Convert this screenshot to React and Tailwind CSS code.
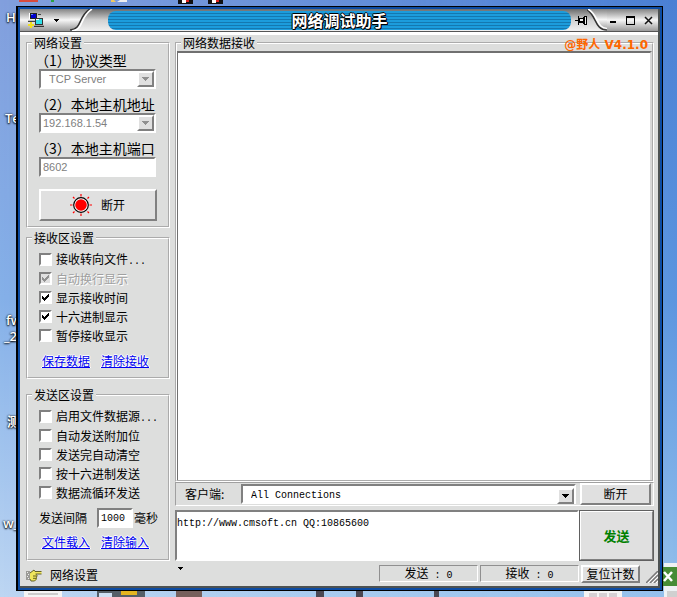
import { useState } from "react";
import clsx from "clsx";

const RECEIVE_OPTIONS = [
    { id: "to_file", label: "接收转向文件", more: true, checked: false },
    { id: "auto_wrap", label: "自动换行显示", checked: true, disabled: true },
    { id: "show_time", label: "显示接收时间", checked: true },
    { id: "hex_view", label: "十六进制显示", checked: true },
    { id: "pause_view", label: "暂停接收显示", checked: false },
];

const SEND_OPTIONS = [
    { id: "file_source", label: "启用文件数据源", more: true, checked: false },
    { id: "auto_suffix", label: "自动发送附加位", checked: false },
    { id: "auto_clear", label: "发送完自动清空", checked: false },
    { id: "hex_send", label: "按十六进制发送", checked: false },
    { id: "loop_send", label: "数据流循环发送", checked: false },
];

const SUNKEN = "border-2 border-t-[#808080] border-l-[#808080] border-b-white border-r-white bg-white outline-none";
const RAISED = "border-2 border-t-white border-l-white border-b-[#808080] border-r-[#808080] bg-[#e0e0e0]";
const LINK = "text-[#0000f0] underline [text-shadow:1px_0_#fff,-1px_0_#fff,0_-1px_#fff]";
const MONO = "font-['Liberation_Mono',monospace] text-[10px]";

function GroupBox({ title, className, children }) {
    return (
        <fieldset className={clsx("min-w-0 border-2 border-white [border-style:groove]", className)}>
            <legend className="ml-1 h-4 px-0.5 leading-4">{title}</legend>
            {children}
        </fieldset>
    );
}

function CheckOption({ id, label, more, checked, disabled }) {
    const [on, setOn] = useState(checked);
    return (
        <div className="flex h-[19px] items-center gap-1">
            <span className="grid size-[13px] place-items-center">
                <input
                    id={id}
                    type="checkbox"
                    checked={on}
                    disabled={disabled}
                    onChange={(e) => setOn(e.target.checked)}
                    className={clsx(
                        "col-start-1 row-start-1 size-[13px] appearance-none border-2 border-t-[#808080] border-r-white border-b-white border-l-[#808080]",
                        disabled ? "bg-[#e0e0e0]" : "bg-white"
                    )}
                />
                {on && (
                    <svg viewBox="0 0 7 7" className="pointer-events-none col-start-1 row-start-1 size-[7px]" shapeRendering="crispEdges">
                        <path
                            d="M0 2h1v1h1v1h1v-1h1v-1h1v-1h1v-1h1v3h-1v1h-1v1h-1v1h-1v1h-1v-1h-1v-1h-1z"
                            fill={disabled ? "#909090" : "#000"}
                        />
                    </svg>
                )}
            </span>
            <label
                htmlFor={id}
                className={clsx("whitespace-nowrap", disabled && "text-[#a0a0a0] [text-shadow:1px_1px_#fff]")}
            >
                {label}
                {more && <span className={MONO}>...</span>}
            </label>
        </div>
    );
}

function DropDown({ id, options, disabled, className }) {
    return (
        <span className={clsx("grid h-5 items-center", SUNKEN, className)}>
            <select
                id={id}
                disabled={disabled}
                className="col-start-1 row-start-1 h-4 w-full appearance-none bg-transparent leading-4 opacity-100 outline-none"
            >
                {options.map((o) => (
                    <option key={o}>{o}</option>
                ))}
            </select>
            <span
                className={clsx(
                    "pointer-events-none col-start-1 row-start-1 grid h-4 w-[17px] place-items-center justify-self-end",
                    RAISED
                )}
            >
                <svg viewBox="0 0 7 4" className="h-1 w-[7px]" shapeRendering="crispEdges">
                    <path d="M0 0h7v1h-1v1h-1v1h-1v1h-1v-1h-1v-1h-1v-1h-1z" fill={disabled ? "#909090" : "#000"} />
                </svg>
            </span>
        </span>
    );
}

function NetIcon() {
    return (
        <svg viewBox="0 0 16 16" className="size-4" shapeRendering="crispEdges">
            <path d="M1 1h8v6h-8z" fill="#fff" />
            <path d="M2 1h6v5h-6z" fill="#0000d0" stroke="#222" />
            <path d="M3 2h2v1h-2z" fill="#6080ff" />
            <path d="M0 8h9v2h-9z" fill="#c0c0c0" />
            <path d="M0 9h7v1h-7z" fill="#444" />
            <path d="M7 6h7v6h-7z" fill="#30e0e8" stroke="#333" />
            <path d="M8 7h3v1h-3z" fill="#fff" />
            <path d="M6 13h10v2h-10z" fill="#a0a0a0" />
            <path d="M6 14h10v1h-10z" fill="#333" />
            <path d="M2 10h2v6h-2zM0 12h6v2h-6z" fill="#f0e020" />
            <path d="M10 2h3v1h-3z" fill="#444" />
        </svg>
    );
}

function PinIcon() {
    return (
        <svg viewBox="0 0 12 10" className="h-2.5 w-3" shapeRendering="crispEdges" fill="#000">
            <path d="M0 5h3v1h-3zM3 1h1v9h-1zM4 3h1v5h-1zM5 3h4v1h-4zM5 6h4v2h-4zM8 2h1v7h-1zM9 1h1v9h-1zM11 1h1v9h-1zM9 1h3v1h-3zM9 9h3v1h-3z" />
            <path d="M5 4h3v2h-3zM10 2h1v7h-1z" fill="#eee" />
        </svg>
    );
}

function SunIcon() {
    return (
        <svg viewBox="0 0 24 24" className="size-6">
            <path
                d="M12 1v2.500M12 20.500v2.500M1 12h2.500M20.500 12h2.500M4 4l1.500 1.500M18.500 18.500l1.500 1.500M20 4l-1.500 1.500M5.500 18.500l-1.500 1.500"
                stroke="#f00"
                strokeWidth="1.200"
            />
            <circle cx="12" cy="12" r="7.300" fill="#fff" stroke="#000" strokeWidth="1.200" />
            <circle cx="12" cy="12" r="5.800" fill="#f00" />
        </svg>
    );
}

function HandIcon() {
    return (
        <svg viewBox="0 0 16 14" className="h-3.5 w-4">
            <path d="M0 3h4v9h-4z" fill="#9a9a96" />
            <path d="M1 4h1v1h-1zM2 6h1v1h-1zM1 8h1v1h-1zM2 10h1v1h-1z" fill="#eee" />
            <path d="M4 5l4-3 1 1.500h6.500v2.500h-5l.5 1v4l-2 2h-3.500l-1.500-2z" fill="#f0e65c" />
            <path d="M4 5l4-3 1 1.500h6.500M15.500 6h-6M10.500 6.500l.5 1-.5 2-.5 2-1.500 1.500h-3.500l-1-2" fill="none" stroke="#55521c" strokeWidth="0.900" />
            <path d="M7 8h3.500M7 10.300h3" stroke="#55521c" strokeWidth="0.900" />
        </svg>
    );
}

function TitleBar() {
    return (
        <header className="flex h-[23px] shrink-0 items-stretch border-b border-[#555] bg-linear-to-b from-[#6c6c6c] via-[#d0d0d0] to-[#f0f0f0]">
            <div className="flex w-[88px] shrink-0">
                <button
                    type="button"
                    aria-label="菜单"
                    className="flex w-[50px] items-center gap-2.5 bg-linear-to-b from-[#858585] via-[#f6f6f6] to-[#9a9a9a] pl-2"
                >
                    <NetIcon />
                    <svg viewBox="0 0 5 3" className="h-[3px] w-[5px]" shapeRendering="crispEdges">
                        <path d="M0 0h5v1h-1v1h-1v1h-1v-1h-1v-1h-1z" />
                    </svg>
                </button>
                <svg viewBox="0 0 38 22" className="h-[22px] w-[38px]">
                    <defs>
                        <linearGradient id="metalLeft" x1="0" y1="0" x2="0" y2="1">
                            <stop offset="0" stopColor="#858585" />
                            <stop offset="0.500" stopColor="#f6f6f6" />
                            <stop offset="1" stopColor="#9a9a9a" />
                        </linearGradient>
                    </defs>
                    <path d="M0 0H21C9 7 12 21 0 21Z" fill="url(#metalLeft)" />
                    <path d="M20 0C8 7 12 21 0 21" fill="none" stroke="#333" strokeWidth="1.500" />
                    <path d="M22 0C10 7 14 21 2 22" fill="none" stroke="#fff" strokeWidth="1.500" />
                </svg>
            </div>
            <h1 className="mt-0.5 mb-px grow rounded-lg bg-[repeating-linear-gradient(#1c9cdc_0_2px,#1478b0_2px_3px)] text-center text-base leading-[18px] font-bold text-white [text-shadow:1px_0_#000,-1px_0_#000,0_1px_#000,0_-1px_#000,1px_1px_#000]">
                网络调试助手
            </h1>
            <div className="flex w-[87px] shrink-0 items-stretch">
                <button type="button" aria-label="置顶" className="flex w-4 items-center pl-1">
                    <PinIcon />
                </button>
                <svg viewBox="0 0 20 22" className="h-[22px] w-5">
                    <defs>
                        <linearGradient id="metalRight" x1="0" y1="0" x2="0" y2="1">
                            <stop offset="0" stopColor="#858585" />
                            <stop offset="0.500" stopColor="#f6f6f6" />
                            <stop offset="1" stopColor="#9a9a9a" />
                        </linearGradient>
                    </defs>
                    <path d="M-1 0C11 6 7 21 20 21V0Z" fill="url(#metalRight)" />
                    <path d="M-1 0C10 6 7 21 20 21" fill="none" stroke="#333" strokeWidth="1.500" />
                    <path d="M1 0C12 6 9 19 20 19.500" fill="none" stroke="#fff" strokeWidth="1.500" />
                </svg>
                <div className="flex grow items-center justify-between bg-linear-to-b from-[#858585] via-[#f6f6f6] to-[#9a9a9a] pr-1">
                    <button type="button" aria-label="最小化">
                        <svg viewBox="0 0 10 10" className="size-2.5" shapeRendering="crispEdges">
                            <path d="M3 6h6v2h-6z" />
                        </svg>
                    </button>
                    <button type="button" aria-label="最大化">
                        <svg viewBox="0 0 10 10" className="size-2.5" shapeRendering="crispEdges">
                            <path fillRule="evenodd" d="M0 1h9v9h-9zM1 3h7v6h-7z" />
                        </svg>
                    </button>
                    <button type="button" aria-label="关闭">
                        <svg viewBox="0 0 10 10" className="size-2.5">
                            <path d="M1 2l7 7M8 2l-7 7" stroke="#111" strokeWidth="1.500" />
                        </svg>
                    </button>
                </div>
            </div>
        </header>
    );
}

function NetworkSettings() {
    const [port, setPort] = useState("8602");
    return (
        <GroupBox title="网络设置" className="h-[193px]">
            <div className="flex flex-col items-start pl-[11px]">
                <label htmlFor="protocol" className="-ml-1 h-[18px] text-sm leading-[18px] whitespace-nowrap">
                    （1）协议类型
                </label>
                <DropDown id="protocol" options={["TCP Server"]} disabled className="w-[117px] pl-2 font-['Liberation_Sans'] text-[11px] text-[#808080]" />
                <label htmlFor="host" className="mt-1.5 -ml-1 h-[18px] text-sm leading-[18px] whitespace-nowrap">
                    （2）本地主机地址
                </label>
                <DropDown id="host" options={["192.168.1.54"]} disabled className="w-[117px] pl-0.5 font-['Liberation_Sans'] text-[11px] text-[#808080]" />
                <label htmlFor="port" className="mt-1.5 -ml-1 h-[18px] text-sm leading-[18px] whitespace-nowrap">
                    （3）本地主机端口
                </label>
                <input
                    id="port"
                    value={port}
                    disabled
                    onChange={(e) => setPort(e.target.value)}
                    className={clsx("h-5 w-[117px] pl-0.5 font-['Liberation_Sans'] text-[11px] text-[#808080]", SUNKEN)}
                />
                <button type="button" className={clsx("mt-3 flex h-8 w-[118px] items-center gap-2 pl-7", RAISED)}>
                    <SunIcon />
                    断开
                </button>
            </div>
        </GroupBox>
    );
}

function ReceiveSettings() {
    return (
        <GroupBox title="接收区设置" className="mt-0.5 h-[149px]">
            <div className="pt-1 pl-[11px]">
                {RECEIVE_OPTIONS.map((o) => (
                    <CheckOption key={o.id} {...o} />
                ))}
            </div>
            <div className="flex gap-[11px] pt-2 pl-3.5">
                <a href="#save" className={LINK}>保存数据</a>
                <a href="#clear-received" className={LINK}>清除接收</a>
            </div>
        </GroupBox>
    );
}

function SendSettings() {
    return (
        <GroupBox title="发送区设置" className="mt-2 h-[174px]">
            <div className="pt-1 pl-[11px]">
                {SEND_OPTIONS.map((o) => (
                    <CheckOption key={o.id} {...o} />
                ))}
            </div>
            <div className="flex items-center pt-1.5 pl-[11px]">
                <label htmlFor="interval" className="mr-2.5">发送间隔</label>
                <input id="interval" defaultValue="1000" className={clsx("mr-px h-5 w-9 pl-0.5", MONO, SUNKEN)} />
                毫秒
            </div>
            <div className="flex gap-[11px] pt-1.5 pl-3.5">
                <a href="#load" className={LINK}>文件载入</a>
                <a href="#clear-input" className={LINK}>清除输入</a>
            </div>
        </GroupBox>
    );
}

function ReceivePanel() {
    return (
        <div className="relative flex grow">
            <GroupBox title="网络数据接收" className="flex grow flex-col">
                <textarea
                    aria-label="网络数据接收"
                    readOnly
                    className="w-full grow resize-none border-t-2 border-r-2 border-l border-t-[#707070] border-r-[#d8d8d8] border-l-[#707070] bg-white outline-none"
                />
            </GroupBox>
            <span className="absolute top-0.5 right-1.5 font-['DejaVu_Sans','Noto_Sans_CJK_SC',sans-serif] leading-4 font-bold text-[#ff6600]">
                @野人 V4.1.0
            </span>
        </div>
    );
}

function Counter({ label, value }) {
    return (
        <output className="h-[17px] w-[99px] border border-t-[#909090] border-r-white border-b-white border-l-[#909090] text-center leading-[14px] whitespace-pre">
            {label}
            <span className={MONO}>{` : ${value}`}</span>
        </output>
    );
}

function StatusBar() {
    return (
        <footer className="flex h-[25px] shrink-0 items-start pt-1 pl-1.5">
            <div className="flex w-[149px] items-center gap-2 pt-0.5">
                <HandIcon />
                网络设置
            </div>
            <svg viewBox="0 0 5 3" className="mt-0.5 ml-[3px] h-[3px] w-[5px]" shapeRendering="crispEdges">
                <path d="M0 0h5v1h-1v1h-1v1h-1v-1h-1v-1h-1z" />
            </svg>
            <div className="ml-auto flex gap-0.5">
                <Counter label="发送" value={0} />
                <Counter label="接收" value={0} />
                <button type="button" className={clsx("h-[18px] w-[59px] leading-[14px] whitespace-nowrap", RAISED)}>
                    复位计数
                </button>
            </div>
            <svg viewBox="0 0 12 12" className="mt-1.5 ml-1.5 size-3">
                <path d="M0 12L12 0M4 12L12 4M8 12L12 8" stroke="#777" strokeWidth="1.500" />
                <path d="M2 12L12 2M6 12L12 6M10 12L12 10" stroke="#fff" />
            </svg>
        </footer>
    );
}

function Desktop() {
    const label = "absolute font-['Open_Sans','Noto_Sans_CJK_SC',sans-serif] text-[13px] leading-4 font-semibold text-white [text-shadow:0_1px_2px_#000,0_0_2px_#000]";
    return (
        <div className="absolute inset-0 overflow-hidden bg-linear-to-b from-[#829fdd] via-[#85b0e8] to-[#bdd6f2]">
            <div className="absolute inset-0 bg-linear-to-b from-[#4a80d4] via-[#5b95df] to-[#94c0ec] [mask-image:linear-gradient(to_right,transparent,black)]" />
            <span className={clsx(label, "top-[9px] left-[6px]")}>H</span>
            <span className={clsx(label, "top-[110px] left-[5px]")}>Te</span>
            <span className={clsx(label, "top-[312px] left-[6px]")}>fw</span>
            <span className={clsx(label, "top-[328px] left-[4px]")}>_2</span>
            <span className={clsx(label, "top-[413px] left-[7px]")}>测</span>
            <span className={clsx(label, "top-[515px] left-[3px]")}>w_</span>
            <svg viewBox="0 0 220 6" className="absolute top-0 left-4 h-1.5 w-[220px]">
                <path d="M3 0h19v2h-19z" fill="#d84a3c" />
                <path d="M35 0h3v2h-3z" fill="#28a040" />
                <path d="M95 0h3l2 2h-5z" fill="#f0c860" />
                <path d="M104 0h7v2h-10z" fill="#eee" />
                <path d="M162 0h15v4h-15zM192 0h15v4h-15z" fill="#111" />
                <path d="M166 0h4v3h-4zM196 0h4v3h-4z" fill="#fff" />
                <path d="M170 0h3v2h-3zM200 0h3v2h-3z" fill="#e02020" />
            </svg>
            <svg viewBox="0 0 630 6" className="absolute bottom-0 left-4 h-1.5 w-[630px]">
                <path d="M8 0h38v6h-38z" fill="#f4f4f4" />
                <path d="M12 2h30v2h-30z" fill="#ccc" />
                <path d="M81 0h48v6h-48z" fill="#555f68" />
                <path d="M83 2h13v4h-13z" fill="#cfe0f4" />
                <path d="M105 0h16v4h-16z" fill="#e4b520" />
                <path d="M160 0h26v6h-26z" fill="#76605c" />
                <path d="M300 0h8v6h-8zM340 0h7v6h-7zM418 0h5v6h-5z" fill="#4a4752" />
                <path d="M568 0h38v6h-38z" fill="#f4f4f4" />
                <path d="M573 2h8v4h-8zM583 2h8v4h-8zM593 2h8v4h-8z" fill="#d6d0d4" />
            </svg>
            <svg viewBox="0 0 14 34" className="absolute right-0 bottom-0 h-[34px] w-3.5">
                <path d="M1 0h13v34h-13z" fill="#eef2f4" />
                <path d="M0 4h14v19h-14z" fill="#468c36" />
                <path d="M1 9l8 9M9 9l-8 9" stroke="#fff" strokeWidth="2.500" />
                <path d="M4 28h10v6h-10z" fill="#d0d0d0" />
            </svg>
        </div>
    );
}

export default function App() {
    return (
        <div className="relative isolate flex min-h-screen flex-col pt-1.5 pr-3.5 pb-1.5 pl-4 font-['Noto_Sans_CJK_SC',sans-serif] text-xs text-black">
            <Desktop />
            <div className="relative flex grow flex-col border border-l-2 border-black bg-[#0c4ca4] p-0.5">
                <div className="flex grow flex-col border-r-2 border-b-2 border-[#4d5252] bg-[#dddedd]">
                    <TitleBar />
                    <main className="flex grow gap-[5px] border-t-3 border-white pr-1 pl-1.5">
                        <div className="w-36 shrink-0">
                            <NetworkSettings />
                            <ReceiveSettings />
                            <SendSettings />
                        </div>

                        <div className="flex min-w-0 grow flex-col">
                            <ReceivePanel />

                            <div className="flex h-6 items-center border border-t-[#a0a0a0] border-r-white border-b-white border-l-[#a0a0a0] pr-0.5 pl-[9px]">
                                <label htmlFor="client" className="w-14 shrink-0">客户端:</label>
                                <DropDown id="client" options={["All Connections"]} className={clsx("grow pt-0.5 pl-2", MONO)} />
                                <button type="button" className={clsx("ml-1 h-[22px] w-[71px] leading-[18px]", RAISED)}>
                                    断开
                                </button>
                            </div>

                            <div className="mt-1 flex h-[51px]">
                                <textarea
                                    aria-label="发送内容"
                                    defaultValue="http://www.cmsoft.cn QQ:10865600"
                                    className={clsx("min-w-0 grow resize-none pt-1 leading-4", MONO, SUNKEN)}
                                />
                                <button
                                    type="button"
                                    className={clsx("w-[75px] text-[13px] font-bold text-[#008000] outline outline-1 -outline-offset-1 outline-[#606060]", RAISED)}
                                >
                                    发送
                                </button>
                            </div>
                        </div>
                    </main>
                    <StatusBar />
                </div>
            </div>
        </div>
    );
}
